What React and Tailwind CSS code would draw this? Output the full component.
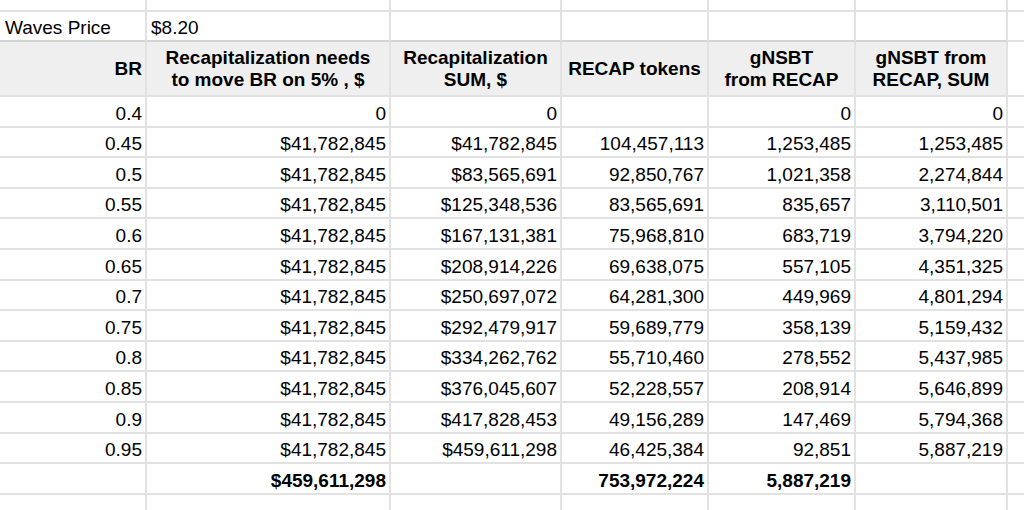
import React from "react";

const rows = [
  ["0.4", "0", "0", "", "0", "0"],
  ["0.45", "$41,782,845", "$41,782,845", "104,457,113", "1,253,485", "1,253,485"],
  ["0.5", "$41,782,845", "$83,565,691", "92,850,767", "1,021,358", "2,274,844"],
  ["0.55", "$41,782,845", "$125,348,536", "83,565,691", "835,657", "3,110,501"],
  ["0.6", "$41,782,845", "$167,131,381", "75,968,810", "683,719", "3,794,220"],
  ["0.65", "$41,782,845", "$208,914,226", "69,638,075", "557,105", "4,351,325"],
  ["0.7", "$41,782,845", "$250,697,072", "64,281,300", "449,969", "4,801,294"],
  ["0.75", "$41,782,845", "$292,479,917", "59,689,779", "358,139", "5,159,432"],
  ["0.8", "$41,782,845", "$334,262,762", "55,710,460", "278,552", "5,437,985"],
  ["0.85", "$41,782,845", "$376,045,607", "52,228,557", "208,914", "5,646,899"],
  ["0.9", "$41,782,845", "$417,828,453", "49,156,289", "147,469", "5,794,368"],
  ["0.95", "$41,782,845", "$459,611,298", "46,425,384", "92,851", "5,887,219"],
];

const headers = [
  ["Recapitalization needs", "to move BR on 5% , $"],
  ["Recapitalization", "SUM, $"],
  ["RECAP tokens"],
  ["gNSBT", "from RECAP"],
  ["gNSBT from", "RECAP, SUM"],
];

const cell = "border-r-2 border-b-2 border-[#e2e2e2] overflow-hidden whitespace-nowrap";
const lastCol = "border-b-2 border-[#e2e2e2]";

function Num({ children, bold }) {
  return (
    <div className={`${cell} flex items-end justify-end pr-[3px] pb-[1px] ${bold ? "font-bold" : ""}`}>
      {children}
    </div>
  );
}

export default function App() {
  return (
    <div
      className="w-[1024px] h-[510px] overflow-hidden bg-white text-black text-[19px] leading-[22px]"
      style={{ fontFamily: '"Liberation Sans", Arial, sans-serif' }}
    >
      <div className="grid grid-cols-[147px_244px_171px_147px_147px_152px_1fr] grid-rows-[12px_30px_55px_repeat(12,30.6px)_31px_1fr] h-[510px]">
        {/* top partial row */}
        {Array.from({ length: 6 }).map((_, i) => (
          <div key={"t" + i} className={cell} />
        ))}
        <div className={lastCol} />
        {/* Waves price row */}
        <div className={`${cell} border-b-[#d4d4d4] flex items-end pl-[5px] pb-[1px]`}>Waves Price</div>
        <div className={`${cell} border-b-[#d4d4d4] flex items-end pl-[4px] pb-[1px]`}>$8.20</div>
        {Array.from({ length: 4 }).map((_, i) => (
          <div key={"w" + i} className={`${cell} border-b-[#d4d4d4]`} />
        ))}
        <div className={lastCol} />
        {/* header */}
        <div className={`${cell} bg-[#efefef] border-[#d4d4d4] flex items-center justify-end pr-[3px] font-bold`}>
          BR
        </div>
        {headers.map((h, i) => (
          <div
            key={"h" + i}
            className={`${cell} bg-[#efefef] border-[#d4d4d4] flex flex-col items-center justify-center text-center font-bold leading-[22px]`}
          >
            {h.map((l, j) => (
              <span key={j}>{l}</span>
            ))}
          </div>
        ))}
        <div className={lastCol} />
        {/* data */}
        {rows.map((r, ri) => (
          <React.Fragment key={"r" + ri}>
            {r.map((v, ci) => (
              <Num key={ci}>{v}</Num>
            ))}
            <div className={lastCol} />
          </React.Fragment>
        ))}
        {/* totals */}
        <Num />
        <Num bold>$459,611,298</Num>
        <Num />
        <Num bold>753,972,224</Num>
        <Num bold>5,887,219</Num>
        <Num />
        <div className={lastCol} />
        {/* last partial row */}
        {Array.from({ length: 6 }).map((_, i) => (
          <div key={"b" + i} className="border-r-2 border-[#e2e2e2]" />
        ))}
        <div />
      </div>
    </div>
  );
}
